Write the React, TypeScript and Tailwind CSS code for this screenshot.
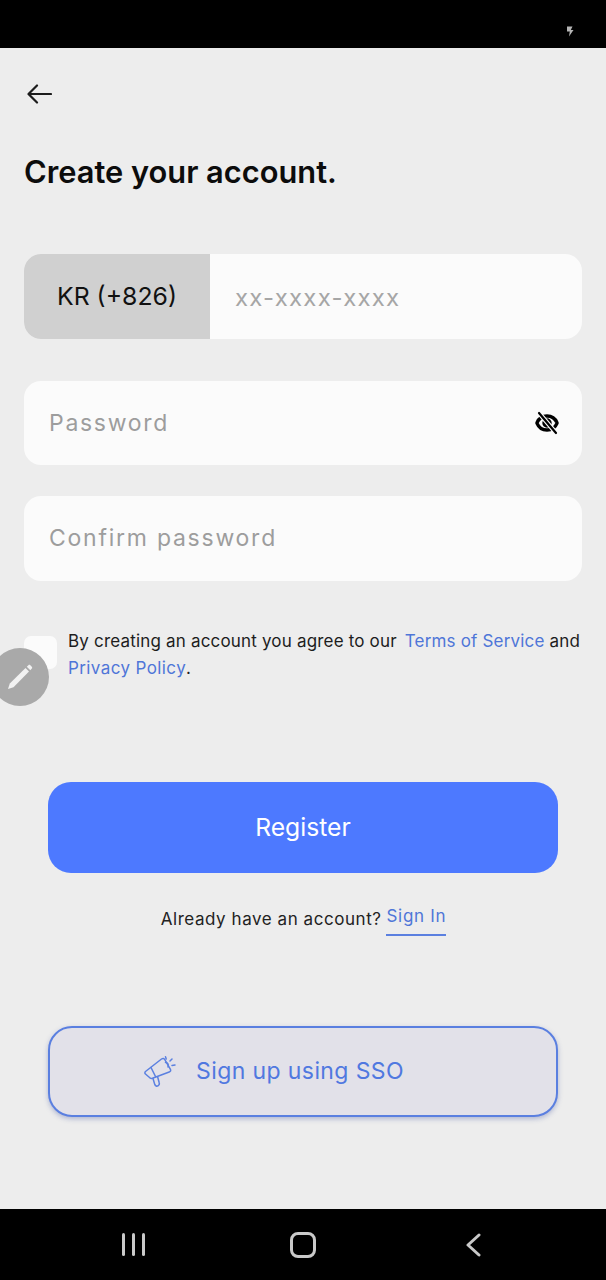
import React from 'react';
import { Eye } from 'lucide-react';

const font = { fontFamily: 'Inter, sans-serif' };

const Megaphone = () => (
  <svg width="32" height="32" viewBox="0 0 32 32" fill="none" stroke="#5b80e0" strokeWidth="1.5" strokeLinecap="round" strokeLinejoin="round">
    <path d="M1.5 15.5 L17.5 3 C19 2 20 2.3 20.8 3.6 L26.3 13.2 C27 14.6 26.6 15.5 25.2 16 L8.5 22.3 C7 22.8 6 22.4 5.2 21.2 L1.2 17.8 C0.8 17 0.9 16 1.5 15.5 Z" />
    <path d="M7 11.5 L11.5 20.5" />
    <path d="M9 22.5 L10.8 28.6 C11.3 30 12.8 30.5 14 29.8 C15.2 29.1 15.6 28 15.2 26.8 L13.6 20.8" />
    <path d="M21.5 6.5 C23.5 6.2 24.8 8.5 24 11" />
    <path d="M21.5 0.8 L22.2 3 M28 3 L26 5 M31 9 L28 9.4" />
  </svg>
);

const App = () => {
  return (
    <div className="w-[606px] h-[1280px] flex flex-col bg-black overflow-hidden relative" style={font}>
      {/* status bar */}
      <div className="h-[48px] shrink-0 flex items-center justify-end pr-[32px] pt-[14px]">
        <svg width="8" height="11" viewBox="0 0 8 11" fill="#b5b5b5"><path d="M1 0.5 H6.5 L4.8 4 H7.5 L3 10.5 L3.8 5.5 H1 Z" /></svg>
      </div>

      <div className="flex-1 bg-[#ededed] flex flex-col">
        <div className="pl-[27px] pt-[36px]">
          <svg width="25" height="20" viewBox="0 0 25 20" fill="none" stroke="#1c1c1c" strokeWidth="2.2" strokeLinecap="round" strokeLinejoin="round" className="block">
            <path d="M24 10 H2 M10 1.5 L1.5 10 L10 18.5" />
          </svg>
        </div>

        <h1 className="pl-[24px] mt-[48px] text-[30.8px] leading-[40px] font-semibold text-[#0c0c0c]">Create your account.</h1>

        <div className="mx-[24px] mt-[62px] h-[85px] flex rounded-[17px] bg-[#fbfbfb] overflow-hidden">
          <div className="w-[186px] bg-[#d0d0d0] flex items-center justify-center text-[24.8px] text-[#111]">KR (+826)</div>
          <div className="flex-1 flex items-center pl-[25px] pt-[2px] text-[24px] text-[#a6a6a6] tracking-[1.2px]">xx-xxxx-xxxx</div>
        </div>

        <div className="mx-[24px] mt-[42px] h-[84px] flex items-center justify-between rounded-[17px] bg-[#fbfbfb] pl-[25px] pr-[23px]">
          <span className="text-[23px] text-[#9d9d9d] tracking-[1.7px]">Password</span>
          <span className="relative block w-[24px] h-[24px]">
            <Eye size={24} strokeWidth={3.4} color="#000" />
            <svg width="24" height="24" viewBox="0 0 24 24" className="absolute inset-0" fill="none" strokeLinecap="round">
              <path d="M4 2 L21 22" stroke="#fbfbfb" strokeWidth="4.5" />
              <path d="M4 2 L21 22" stroke="#000" strokeWidth="2.2" />
            </svg>
          </span>
        </div>

        <div className="mx-[24px] mt-[31px] h-[85px] flex items-center rounded-[17px] bg-[#fbfbfb] pl-[25px]">
          <span className="text-[23px] text-[#9d9d9d] tracking-[1.75px]">Confirm password</span>
        </div>

        <div className="mt-[47px] pl-[24px] flex items-start">
          <div className="w-[33px] h-[33px] mt-[8px] rounded-[7px] bg-[#fbfbfb] shrink-0" />
          <p className="ml-[11px] w-[525px] text-[17px] tracking-[0.18px] leading-[27px] text-[#1d1d1d] whitespace-nowrap">
            By creating an account you agree to our <span className="text-[#4f76d8] ml-[3px]">Terms of Service</span> and
            <br />
            <span className="text-[#4f76d8] tracking-[0.4px]">Privacy Policy</span>.
          </p>
        </div>

        <button className="mx-[48px] mt-[100px] h-[91px] rounded-[23px] bg-[#4d79ff] text-white text-[24.7px]">Register</button>

        <div className="mt-[30px] flex justify-center items-start pl-[1px]">
          <span className="text-[17px] tracking-[0.55px] leading-[30px] text-[#222] mt-[1px]">Already have an account?</span>
          <span className="ml-[5px] text-[17px] tracking-[0.7px] leading-[26px] text-[#4f76d8] border-b-2 border-[#5b80e0] pb-[5px]">Sign In</span>
        </div>

        <button className="mx-[48px] mt-[90px] h-[91px] rounded-[24px] bg-[#e2e1e9] border-2 border-[#5a7fe0] shadow-[0_2px_5px_rgba(60,80,160,0.35)] flex items-center justify-start gap-[20px] pl-[94px] text-[23px] text-[#5078e0] tracking-[0.4px]">
          <Megaphone />
          <span>Sign up using SSO</span>
        </button>
      </div>

      {/* android nav */}
      <div className="h-[71px] shrink-0 flex items-center justify-between pl-[122px] pr-[125px]">
        <div className="flex gap-[7px]">
          <div className="w-[3px] h-[23px] bg-[#c9c9c9] rounded-sm" />
          <div className="w-[3px] h-[23px] bg-[#c9c9c9] rounded-sm" />
          <div className="w-[3px] h-[23px] bg-[#c9c9c9] rounded-sm" />
        </div>
        <div className="w-[26px] h-[26px] mr-[4px] border-[3px] border-[#c9c9c9] rounded-[8px]" />
        <svg width="16" height="24" viewBox="0 0 16 24" fill="none" stroke="#c9c9c9" strokeWidth="3" strokeLinecap="round" strokeLinejoin="round">
          <path d="M14 2 L3 12 L14 22" />
        </svg>
      </div>

      {/* floating edit button */}
      <div className="absolute left-[-9px] top-[648px] w-[58px] h-[58px] rounded-full bg-[#a9a9a9] flex items-center justify-center">
        <svg width="30" height="30" viewBox="0 0 30 30" fill="#f2f2f2">
          <path d="M3 27 L4.8 21.5 L20.5 6 L24 9.5 L8.5 25.2 Z" />
          <path d="M21.8 4.7 L23.4 3.2 C24 2.7 24.8 2.7 25.3 3.2 L26.8 4.7 C27.3 5.2 27.3 6 26.8 6.6 L25.3 8.2 Z" />
        </svg>
      </div>
    </div>
  );
};

export default App;
